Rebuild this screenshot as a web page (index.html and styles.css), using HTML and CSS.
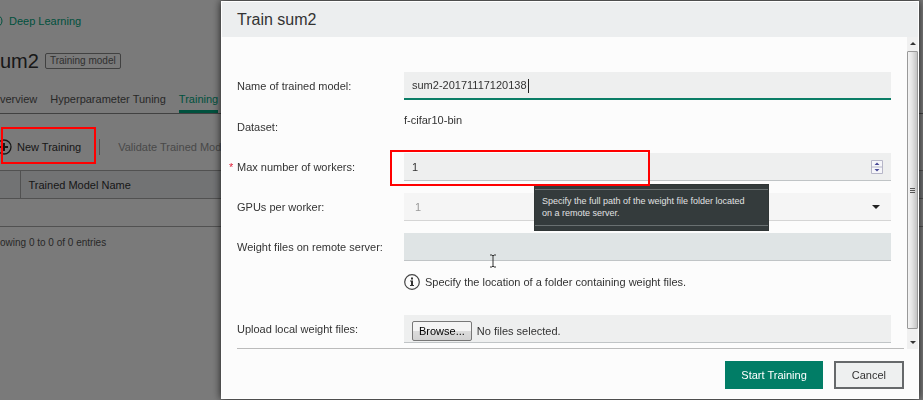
FILE: index.html
```html
<!DOCTYPE html>
<html lang="en">
<head>
  <meta charset="UTF-8" />
  <meta name="viewport" content="width=device-width, initial-scale=1.0" />
  <title>Train sum2</title>
  <link rel="stylesheet" href="styles.css">
</head>
<body>
  <main class="page">
    <a class="back" href="#">
      <svg class="back-icon" width="14" height="14" viewBox="0 0 14 14"><circle cx="7" cy="7" r="6" fill="none" stroke="currentColor"/><path d="M8 4L5 7l3 3M5 7h5" fill="none" stroke="currentColor"/></svg>
      Deep Learning
    </a>
    <div class="heading">
      <h1>um2</h1>
      <span class="tag">Training model</span>
    </div>
    <nav class="tabs">
      <a href="#">verview</a>
      <a href="#">Hyperparameter Tuning</a>
      <a class="active" href="#">Training</a>
    </nav>
    <div class="toolbar">
      <button class="tool" type="button">
        <svg class="plus-icon" width="16" height="16" viewBox="0 0 16 16"><circle cx="8" cy="8" r="7" fill="none" stroke="currentColor" stroke-width="1.3"/><path d="M8 4v8M4 8h8" stroke="currentColor" stroke-width="2"/></svg>
        New Training
      </button>
      <button class="tool validate" type="button" disabled>Validate Trained Model</button>
    </div>
    <table class="models">
      <thead>
        <tr><th class="check"></th><th>Trained Model Name</th></tr>
      </thead>
      <tbody>
        <tr><td colspan="2"></td></tr>
      </tbody>
    </table>
    <p class="entries">owing 0 to 0 of 0 entries</p>
  </main>

  <div class="overlay">
    <form class="modal" role="dialog" aria-labelledby="modal-title">
      <h2 class="modal-header" id="modal-title">Train sum2</h2>
      <div class="modal-body">
        <div class="fields">
          <div class="row">
            <label for="name">Name of trained model:</label>
            <input class="control focused" id="name" type="text" value="sum2-20171117120138">
            <span class="caret"></span>
          </div>
          <div class="row dataset">
            <span class="label">Dataset:</span>
            <span class="value">f-cifar10-bin</span>
          </div>
          <div class="row">
            <label class="required" for="workers">Max number of workers:</label>
            <div class="control with-icon">
              <input id="workers" type="number" value="1">
              <svg class="spinner" width="12" height="14" viewBox="0 0 12 14"><path d="M.5 .5h11v13H.5zM.5 7h11" fill="#f6f6fa" stroke="#b6b6c8"/><path d="M6 2.5L8.500 5h-5zM6 11.500L3.500 9h5z" fill="#4a4a96"/></svg>
            </div>
            <div class="highlight highlight-workers"></div>
          </div>
          <div class="row">
            <label for="gpus">GPUs per worker:</label>
            <div class="control with-icon disabled">
              <select id="gpus" disabled><option>1</option></select>
              <svg class="arrow" width="8" height="4" viewBox="0 0 8 4"><path d="M0 0h8L4 4z" fill="#222"/></svg>
            </div>
          </div>
          <div class="row">
            <label for="remote">Weight files on remote server:</label>
            <input class="control hovered" id="remote" type="text">
            <div class="tooltip" role="tooltip"><span>Specify the full path of the weight file folder located on a remote server.</span></div>
            <svg class="pointer" width="8" height="14" viewBox="0 0 8 14"><path d="M1 1h2l1 1 1-1h2M4 2v10M1 13h2l1-1 1 1h2" fill="none" stroke="#333"/></svg>
          </div>
          <div class="row hint">
            <svg width="16" height="16" viewBox="0 0 16 16"><circle cx="8" cy="8" r="7.300" fill="none" stroke="#444" stroke-width="1.200"/><path d="M7 3.500h2v2H7zM6 6.500h3v4.500h1v1H6v-1h1V7.500H6z" fill="#333"/></svg>
            <span>Specify the location of a folder containing weight files.</span>
          </div>
          <div class="row">
            <label for="upload">Upload local weight files:</label>
            <div class="control upload">
              <input class="file" id="upload" type="file" multiple>
              <button class="browse" type="button" onclick="document.getElementById('upload').click()">Browse...</button>
              <span>No files selected.</span>
            </div>
          </div>
        </div>
        <div class="scrollbar">
          <svg width="6" height="3" viewBox="0 0 6 3"><path d="M0 3h6L3 0z" fill="#333"/></svg>
          <div class="thumb"><i></i><i></i><i></i></div>
          <svg width="6" height="3" viewBox="0 0 6 3"><path d="M0 0h6L3 3z" fill="#333"/></svg>
        </div>
      </div>
      <div class="modal-footer">
        <button class="btn primary" type="button">Start Training</button>
        <button class="btn" type="button">Cancel</button>
      </div>
    </form>
  </div>
  <div class="highlight highlight-new"></div>
</body>
</html>
```

FILE: styles.css
```css
* { box-sizing: border-box; }
body {
  margin: 0;
  height: 100vh;
  overflow: hidden;
  font-family: "Liberation Sans", Arial, sans-serif;
  font-size: 11px;
  line-height: 16px;
  color: #333;
  background: #fff;
}
button, input, select { font: inherit; color: inherit; }

/* page behind the dialog */
.page { padding-top: 13px; white-space: nowrap; }
.back {
  display: flex;
  align-items: center;
  gap: 6px;
  color: #01a982;
  text-decoration: none;
}
.back-icon { margin-left: -11px; }
.heading {
  display: flex;
  align-items: center;
  gap: 6px;
  margin-top: 16px;
  height: 32px;
}
h1 { margin: 0; font-size: 20px; font-weight: normal; }
.tag {
  padding: 0 4px;
  border: 1px solid #888;
  border-radius: 2px;
  font-size: 10px;
  line-height: 14px;
  color: #666;
}
.tabs {
  display: flex;
  gap: 13px;
  margin-top: 13px;
  border-bottom: 1px solid #888;
}
.tabs a {
  height: 23px;
  line-height: 18px;
  color: #555;
  text-decoration: none;
}
.tabs .active { color: #01a982; border-bottom: 3px solid #01a982; }
.toolbar { display: flex; align-items: center; height: 56px; padding-top: 9px; }
.tool {
  display: flex;
  align-items: center;
  gap: 5px;
  padding: 0;
  border: 0;
  background: none;
}
.plus-icon { margin-left: -4px; }
.validate {
  margin-left: 18px;
  padding-left: 18px;
  border-left: 1px solid #aaa;
  color: #999;
}
.models { width: 100%; border-collapse: collapse; }
.models th {
  height: 28px;
  padding: 0 8px;
  border: 1px solid #aaa;
  border-width: 1px 0;
  background: #eef0f3;
  font-weight: normal;
  text-align: left;
}
.models .check { width: 20px; padding: 0; border-right-width: 1px; }
.models td { height: 28px; border-bottom: 1px solid #aaa; }
.entries { margin: 8px 0; font-size: 10px; color: #555; }

/* dialog */
.overlay {
  position: fixed;
  inset: 0;
  display: flex;
  padding: 1px 4px 1px 221px;
  background: rgba(0, 0, 0, 0.52);
}
.modal {
  flex: 1;
  display: flex;
  flex-direction: column;
  border: 1px solid #fff;
  background: #fcfcfc;
  box-shadow: 0 0 8px rgba(0, 0, 0, 0.8);
}
.modal-header {
  margin: 0;
  padding: 0 15px;
  background: #eceeef;
  font-size: 16px;
  font-weight: normal;
  line-height: 35px;
}
.modal-body { display: flex; flex: 1; }
.fields {
  flex: 1;
  display: flex;
  flex-direction: column;
  gap: 12px;
  margin: 0 3px 0 15px;
  padding: 35px 13px 5px 0;
  border-bottom: 1px solid #bbb;
}
.row {
  position: relative;
  display: grid;
  grid-template-columns: 167px 1fr;
  align-items: center;
}
.required::before {
  content: "*";
  position: absolute;
  left: -8px;
  color: #e0203a;
}
.control {
  width: 100%;
  height: 28px;
  padding: 0 8px;
  border: 0;
  border-bottom: 1px solid #c0c4c6;
  border-radius: 0;
  outline: 0;
  background: #eeefef;
}
.focused { border-bottom: 2px solid #0b7d66; }
.hovered { background: #dfe4e5; }
.with-icon { display: flex; align-items: center; }
.with-icon input, .with-icon select {
  flex: 1;
  height: 100%;
  padding: 0;
  border: 0;
  outline: 0;
  background: none;
  appearance: textfield;
}
.with-icon select { appearance: none; opacity: 1; padding-left: 3px; }
.with-icon input::-webkit-inner-spin-button { appearance: none; }
.disabled { background: #f5f5f5; color: #999; border-color: #d5d5d5; }
.arrow { margin-right: 3px; }
.dataset { height: 29px; }
.dataset .value { align-self: start; }
.hint {
  grid-template-columns: 16px 1fr;
  gap: 5px;
  height: 30px;
  margin-left: 167px;
  padding-bottom: 12px;
}
.upload { display: flex; align-items: center; gap: 5px; padding-top: 4px; }
.file {
  position: absolute;
  width: 1px;
  height: 1px;
  opacity: 0;
}
.browse {
  height: 20px;
  padding: 0 6px;
  border: 1px solid #777;
  border-radius: 2px;
  background: linear-gradient(#f4f4f4 50%, #dcdcdc 50%, #d2d2d2);
  color: #000;
}
.caret {
  position: absolute;
  left: 291px;
  width: 1px;
  height: 14px;
  background: #222;
}
.tooltip {
  position: absolute;
  z-index: 2;
  left: 297px;
  top: -49px;
  width: 235px;
  padding: 4px 0;
  border: 1px solid #303636;
  background: #343b3c;
  color: #e0e2e2;
  font-size: 9px;
  line-height: 12px;
}
.tooltip span {
  display: block;
  padding: 5px 16px 6px 7px;
  border: 1px solid #697071;
  border-width: 1px 0;
}
.pointer { position: absolute; left: 252px; top: 21px; }
.scrollbar {
  display: flex;
  flex-direction: column;
  align-items: center;
  justify-content: space-between;
  width: 11px;
  padding: 5px 0;
  background: #f0f0f0;
}
.thumb {
  flex: 1;
  display: flex;
  flex-direction: column;
  align-items: center;
  justify-content: center;
  gap: 1px;
  width: 11px;
  margin: 6px 0 12px;
  border: 1px solid #999;
  border-radius: 1px;
  background: linear-gradient(90deg, #f4f4f4, #e4e4e4 45%, #c4c4c4);
}
.thumb i { width: 5px; height: 1px; background: #555; }
.modal-footer {
  display: flex;
  justify-content: flex-end;
  gap: 11px;
  padding: 12px 14px 10px;
}
.btn {
  height: 28px;
  padding: 0 16px;
  border: 2px solid #66696b;
  background: #eef0f0;
}
.primary { padding: 0 14px; border-color: #017d66; background: #017d66; color: #fff; }

/* red call-out frames */
.highlight { position: absolute; z-index: 3; border: 2px solid #f00; pointer-events: none; }
.highlight-workers { left: 153px; top: -3px; width: 260px; height: 36px; }
.highlight-new { left: 1px; top: 127px; width: 95px; height: 37px; }
```
